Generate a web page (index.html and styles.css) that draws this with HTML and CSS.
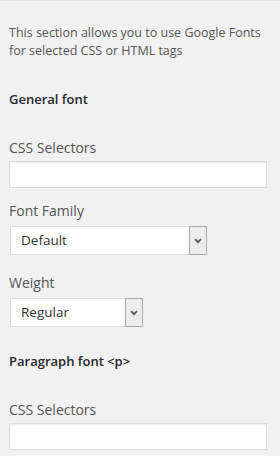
FILE: index.html
```
<!DOCTYPE html>
<html lang="en">
  <head>
    <meta charset="utf-8">
    <title>Google Fonts</title>
    <meta name="viewport" content="width=device-width, initial-scale=1.0">
    <link rel="stylesheet" href="styles.css">
  </head>
  <body>
    <main class="panel">

      <p class="intro">This section allows you to use Google Fonts for selected CSS or HTML tags</p>

      <h3 class="group-title">General font</h3>

      <label class="field-label" for="general-selectors">CSS Selectors</label>
      <input class="text-input" id="general-selectors" type="text">

      <label class="field-label">Font Family</label>
      <div class="select select-family">
        <span class="select-value">Default</span>
        <span class="select-arrow"><svg width="8" height="6" viewBox="0 0 8 6"><path d="M1 1.2l3 3 3-3" fill="none" stroke="#555" stroke-width="1.7"/></svg></span>
      </div>

      <label class="field-label">Weight</label>
      <div class="select select-weight">
        <span class="select-value">Regular</span>
        <span class="select-arrow"><svg width="8" height="6" viewBox="0 0 8 6"><path d="M1 1.2l3 3 3-3" fill="none" stroke="#555" stroke-width="1.7"/></svg></span>
      </div>

      <h3 class="group-title group-title-gap">Paragraph font &lt;p&gt;</h3>

      <label class="field-label" for="paragraph-selectors">CSS Selectors</label>
      <input class="text-input" id="paragraph-selectors" type="text">

    </main>
  </body>
</html>
```

FILE: styles.css
```
html {
  box-sizing: border-box;
  background: #f1f1f1;
}

*,
*:before,
*:after {
  box-sizing: inherit;
}

body {
  margin: 0;
  font-family: "Open Sans", "Noto Sans", sans-serif;
  font-size: 13px;
  color: #444;
}

.panel {
  border-top: 1px solid #e2e2e2;
  padding: 0 13px 0 9px;
  display: flex;
  flex-direction: column;
  align-items: flex-start;
}

.intro {
  margin: 23px 0 0;
  font-size: 12.5px;
  line-height: 18px;
  color: #555;
}

.group-title {
  margin: 30px 0 0;
  font-size: 13px;
  font-weight: 600;
  line-height: 18px;
  color: #23282d;
}

.group-title-gap {
  margin-top: 25px;
}

.field-label {
  display: block;
  margin-top: 19px;
  line-height: 18px;
  font-size: 14px;
  color: #555;
}

.group-title + .field-label {
  margin-top: 31px;
}

.text-input {
  display: block;
  width: 100%;
  height: 27px;
  margin: 4px 0 0;
  border: 1px solid #ddd;
  box-shadow: inset 0 1px 2px rgba(0, 0, 0, .07);
  background: #fff;
}

.text-input + .field-label {
  margin-top: 14px;
}

.select {
  display: flex;
  margin: 6px 0 0 1px;
  height: 29px;
  border: 1px solid #ddd;
  background: #fff;
}

.select-family {
  width: 197px;
}

.select-weight {
  width: 133px;
}

.select-value {
  flex: 1;
  padding: 4px 10px;
  line-height: 19px;
  font-size: 13.5px;
  color: #333;
}

.select-arrow {
  width: 18px;
  margin: -1px -1px -1px 0;
  display: flex;
  align-items: center;
  justify-content: center;
  border: 1px solid #aaa;
  background: #ececec;
}
```
